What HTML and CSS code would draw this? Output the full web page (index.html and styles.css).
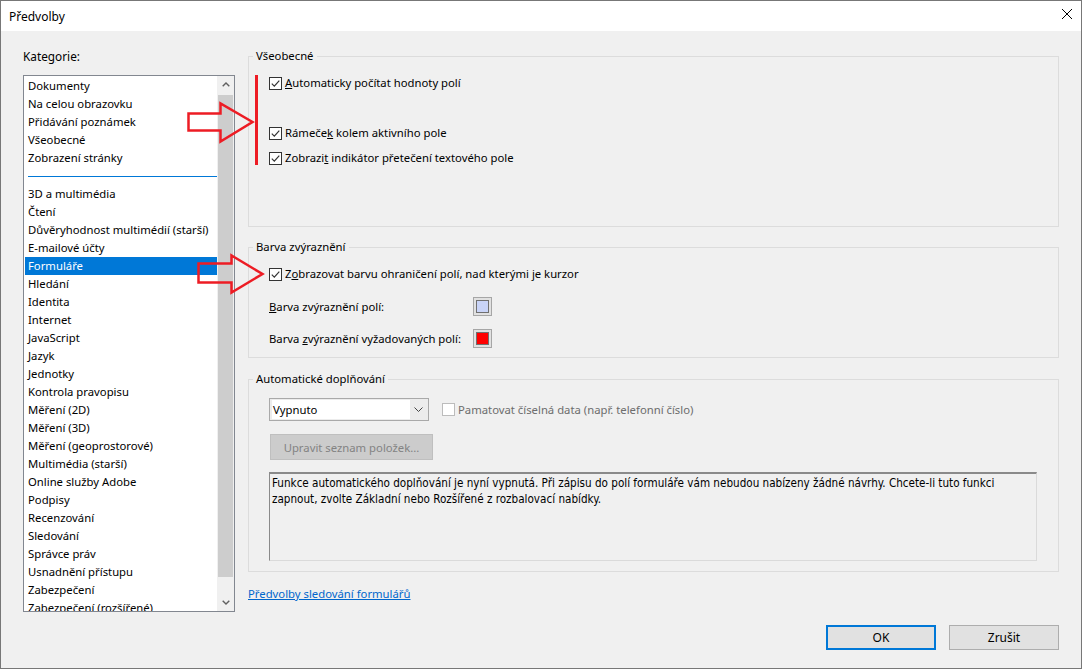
FILE: index.html
```html
<!DOCTYPE html>
<html lang="cs">
<head>
<meta charset="utf-8">
<title>Předvolby</title>
<link rel="stylesheet" href="styles.css">
</head>
<body>
<div class="window">
  <div class="titlebar">
    <span class="title">Předvolby</span>
    <svg class="close" width="10" height="10" viewBox="0 0 10 10"><path d="M0 0L10 10M10 0L0 10" stroke="#000" stroke-width="1" fill="none"/></svg>
  </div>
  <div class="body">
    <div class="main">
      <div class="left">
        <div class="cat-label">Kate<u>g</u>orie:</div>
        <div class="listbox">
          <ul class="items">
            <li>Dokumenty</li>
            <li>Na celou obrazovku</li>
            <li>Přidávání poznámek</li>
            <li>Všeobecné</li>
            <li>Zobrazení stránky</li>
            <li class="sep"><span class="sep-line"></span></li>
            <li>3D a multimédia</li>
            <li>Čtení</li>
            <li>Důvěryhodnost multimédií (starší)</li>
            <li>E-mailové účty</li>
            <li class="selected">Formuláře</li>
            <li>Hledání</li>
            <li>Identita</li>
            <li>Internet</li>
            <li>JavaScript</li>
            <li>Jazyk</li>
            <li>Jednotky</li>
            <li>Kontrola pravopisu</li>
            <li>Měření (2D)</li>
            <li>Měření (3D)</li>
            <li>Měření (geoprostorové)</li>
            <li>Multimédia (starší)</li>
            <li>Online služby Adobe</li>
            <li>Podpisy</li>
            <li>Recenzování</li>
            <li>Sledování</li>
            <li>Správce práv</li>
            <li>Usnadnění přístupu</li>
            <li>Zabezpečení</li>
            <li>Zabezpečení (rozšířené)</li>
          </ul>
          <div class="scrollbar">
            <div class="sb-btn"><svg width="8" height="5" viewBox="0 0 8 5"><path d="M0.7 4.3L4 1L7.3 4.3" stroke="#606060" stroke-width="1.4" fill="none"/></svg></div>
            <div class="track"><div class="thumb"></div></div>
            <div class="sb-btn"><svg width="8" height="5" viewBox="0 0 8 5"><path d="M0.7 0.7L4 4L7.3 0.7" stroke="#606060" stroke-width="1.4" fill="none"/></svg></div>
          </div>
        </div>
      </div>
      <div class="right">
        <div class="group group-general">
          <div class="legend">Všeobecné</div>
          <div class="check-row r1"><span class="cb"><svg width="11" height="11" viewBox="0 0 11 11"><path d="M1.8 5.6L4.3 8.1L9.3 2.6" stroke="#333" stroke-width="1.2" fill="none"/></svg></span><span><u>A</u>utomaticky počítat hodnoty polí</span></div>
          <div class="check-row r2"><span class="cb"><svg width="11" height="11" viewBox="0 0 11 11"><path d="M1.8 5.6L4.3 8.1L9.3 2.6" stroke="#333" stroke-width="1.2" fill="none"/></svg></span><span>Rámeče<u>k</u> kolem aktivního pole</span></div>
          <div class="check-row r3"><span class="cb"><svg width="11" height="11" viewBox="0 0 11 11"><path d="M1.8 5.6L4.3 8.1L9.3 2.6" stroke="#333" stroke-width="1.2" fill="none"/></svg></span><span>Zobrazi<u>t</u> indikátor přetečení textového pole</span></div>
        </div>
        <div class="group group-color">
          <div class="legend">Barva zvýraznění</div>
          <div class="check-row r1"><span class="cb"><svg width="11" height="11" viewBox="0 0 11 11"><path d="M1.8 5.6L4.3 8.1L9.3 2.6" stroke="#333" stroke-width="1.2" fill="none"/></svg></span><span>Z<u>o</u>brazovat barvu ohraničení polí, nad kterými je kurzor</span></div>
          <div class="swatch-row s1"><span class="swatch-label"><u>B</u>arva zvýraznění polí:</span><span class="swatch"><span class="swatch-inner blue"></span></span></div>
          <div class="swatch-row s2"><span class="swatch-label">Barva <u>z</u>výraznění vyžadovaných polí:</span><span class="swatch"><span class="swatch-inner red"></span></span></div>
        </div>
        <div class="group group-auto">
          <div class="legend">Automatické doplňování</div>
          <div class="select-row">
            <div class="select">
              <span class="select-field">Vypnuto</span>
              <span class="select-arrow"><svg width="9" height="5" viewBox="0 0 9 5"><path d="M0.5 0.5L4.5 4.5L8.5 0.5" stroke="#444" stroke-width="1" fill="none"/></svg></span>
            </div>
            <span class="cb disabled"></span>
            <span class="disabled-text">Pamatovat číselná data (např. telefonní číslo)</span>
          </div>
          <div class="btn-disabled">Upravit seznam položek...</div>
          <div class="info">Funkce automatického doplňování je nyní vypnutá. Při zápisu do polí formuláře vám nebudou nabízeny žádné návrhy. Chcete-li tuto funkci zapnout, zvolte Základní nebo Rozšířené z rozbalovací nabídky.</div>
        </div>
        <a class="link" href="#">Předvolby sledování formulářů</a>
      </div>
    </div>
    <div class="buttons">
      <div class="btn primary">OK</div>
      <div class="btn">Zrušit</div>
    </div>
  </div>
  <svg class="annot" width="1082" height="669" viewBox="0 0 1082 669">
    <rect x="255" y="75" width="3" height="90" fill="#ed1c24"/>
    <polygon points="188.5,113.5 220.5,113.5 220.5,103.5 252.5,122 220.5,141.5 220.5,130.5 188.5,130.5" fill="none" stroke="#ed1c24" stroke-width="2.5" stroke-linejoin="miter"/>
    <polygon points="198.5,263.5 231.5,263.5 231.5,255.5 262.5,274 231.5,292.5 231.5,282.5 198.5,282.5" fill="none" stroke="#ed1c24" stroke-width="2.5" stroke-linejoin="miter"/>
  </svg>
</div>
</body>
</html>
```
FILE: styles.css
```css
html, body {
  margin: 0;
  padding: 0;
  width: 1082px;
  height: 669px;
  overflow: hidden;
  background: #f0f0f0;
}
body {
  font-family: "Noto Sans", "Open Sans", sans-serif;
  font-size: 11.3px;
  color: #000;
}
.window {
  position: relative;
  width: 1082px;
  height: 669px;
  box-sizing: border-box;
  border: 1px solid #777;
  background: #f0f0f0;
  display: flex;
  flex-direction: column;
}
.titlebar {
  height: 30px;
  flex: none;
  background: #fff;
  display: flex;
  align-items: center;
  justify-content: space-between;
  padding: 0 9px 0 8px;
}
.title {
  font-size: 12px;
}
.close {
  align-self: flex-start;
  margin-top: 8px;
}
.body {
  flex: 1;
  display: flex;
  flex-direction: column;
}
.main {
  display: flex;
  gap: 13px;
  padding: 0 22px;
  height: 581px;
}
.left {
  width: 212px;
  flex: none;
}
.cat-label {
  margin-top: 16px;
  height: 18px;
  line-height: 18px;
  font-size: 11.8px;
}
.listbox {
  margin-top: 10px;
  height: 537px;
  box-sizing: border-box;
  border: 1px solid #828790;
  background: #fff;
  display: flex;
}
.items {
  flex: 1;
  list-style: none;
  margin: 0;
  padding: 1px 0 0 0;
  overflow: hidden;
}
.items li {
  height: 18px;
  line-height: 17px;
  padding-left: 4px;
  white-space: nowrap;
}
.items li.selected {
  background: #0078d7;
  color: #fff;
  margin-left: 1px;
  padding-left: 3px;
}
.items li.sep {
  display: flex;
  align-items: center;
}
.sep-line {
  display: block;
  flex: 1;
  height: 1px;
  background: #0078d7;
}
.scrollbar {
  width: 17px;
  flex: none;
  background: #f0f0f0;
  display: flex;
  flex-direction: column;
}
.sb-btn {
  height: 17px;
  flex: none;
  display: flex;
  align-items: center;
  justify-content: center;
}
.track {
  flex: 1;
}
.thumb {
  margin: 2px 1px 0 1px;
  height: 482px;
  background: #cdcdcd;
}
.right {
  flex: 1;
  display: flex;
  flex-direction: column;
}
.group {
  box-sizing: border-box;
  border: 1px solid #dcdcdc;
  padding: 0 21px 0 20px;
}
.legend {
  display: block;
  width: fit-content;
  height: 16px;
  line-height: 15px;
  margin: -9px 0 0 -16px;
  padding: 0 3px;
  background: #f0f0f0;
}
.group-general {
  margin-top: 25px;
  height: 171px;
}
.group-color {
  margin-top: 20px;
  height: 111px;
}
.group-auto {
  margin-top: 21px;
  height: 193px;
}
.check-row {
  display: flex;
  align-items: center;
  height: 18px;
  white-space: nowrap;
}
.check-row span:last-child {
  line-height: 17px;
  align-self: flex-start;
}
.group-general .r1 { margin-top: 10px; }
.group-general .r2 { margin-top: 32px; }
.group-general .r3 { margin-top: 7px; }
.group-color .r1 { margin-top: 10px; }
.cb {
  width: 13px;
  height: 13px;
  flex: none;
  box-sizing: border-box;
  border: 1px solid #333;
  background: #fff;
  margin-right: 3px;
  display: flex;
}
.cb.disabled {
  border-color: #bcbcbc;
  background: #fff;
  margin-left: 13px;
}
.swatch-row {
  display: flex;
  align-items: center;
  height: 19px;
}
.s1 { margin-top: 14px; }
.s2 { margin-top: 13px; }
.swatch-label {
  width: 204px;
  flex: none;
}
.swatch {
  width: 19px;
  height: 19px;
  box-sizing: border-box;
  border: 1px solid #a6a6a6;
  background: #e1e1e1;
  padding: 2px;
  display: flex;
}
.swatch-inner {
  flex: 1;
  box-sizing: border-box;
  border: 1px solid #707070;
}
.swatch-inner.blue { background: #c9d4f8; }
.swatch-inner.red { background: #ff0000; }
.select-row {
  display: flex;
  align-items: center;
  margin-top: 11px;
  height: 23px;
}
.select {
  width: 160px;
  height: 23px;
  box-sizing: border-box;
  border: 1px solid #a9a9a9;
  background: #ececec;
  padding: 1px 2px;
  display: flex;
}
.select-field {
  width: 137px;
  background: #fff;
  padding-left: 1px;
  line-height: 19px;
}
.select-arrow {
  flex: 1;
  display: flex;
  align-items: center;
  justify-content: center;
}
.disabled-text {
  color: #6d6d6d;
  white-space: nowrap;
}
.btn-disabled {
  margin-top: 13px;
  margin-left: 1px;
  width: 163px;
  height: 26px;
  box-sizing: border-box;
  border: 1px solid #bfbfbf;
  background: #cccccc;
  color: #838383;
  display: flex;
  align-items: center;
  justify-content: center;
}
.info {
  margin-top: 12px;
  width: 768px;
  height: 89px;
  box-sizing: border-box;
  border-style: solid;
  border-width: 2px 1px 1px 1px;
  border-color: #8a8a8a #dadada #dadada #8a8a8a;
  padding: 1px 2px 0 2px;
  font-family: "DejaVu Sans Condensed", "Liberation Sans", sans-serif;
  font-size: 11.6px;
  line-height: 16px;
}
.link {
  margin-top: 14px;
  line-height: 16px;
  color: #0066cc;
  text-decoration: underline;
  width: fit-content;
}
.buttons {
  display: flex;
  justify-content: flex-end;
  gap: 13px;
  padding-right: 22px;
  margin-top: 13px;
}
.btn {
  width: 110px;
  height: 25px;
  box-sizing: border-box;
  border: 1px solid #adadad;
  background: #e1e1e1;
  display: flex;
  align-items: center;
  justify-content: center;
  font-size: 12px;
}
.btn.primary {
  border: 2px solid #0078d7;
}
.annot {
  position: absolute;
  left: -1px;
  top: -1px;
  pointer-events: none;
}
```
